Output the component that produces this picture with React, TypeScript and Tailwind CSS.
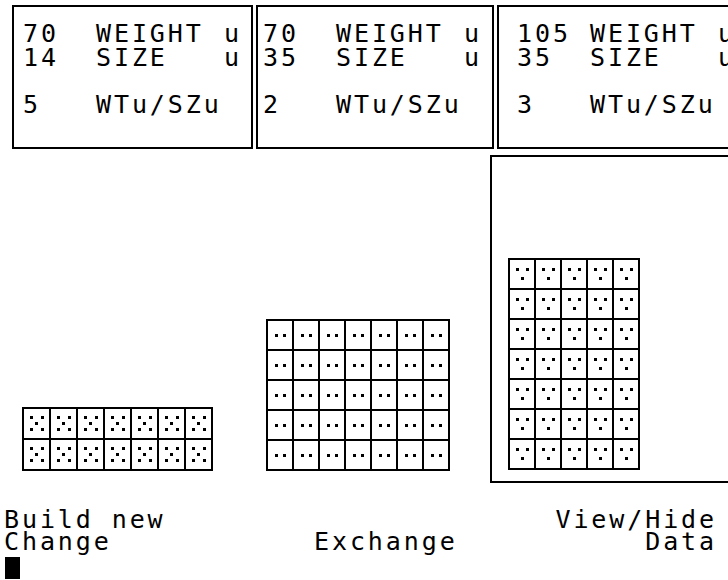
import React from "react";

const Dot = () => <div className="w-[3px] h-[3px] bg-black" />;

function Cell({ kind, big }: { kind: "five" | "two" | "three"; big?: boolean }) {
  const size = big ? "w-[25px] h-[29px]" : "w-[24px] h-[28px]";
  let inner: React.ReactNode = null;
  if (kind === "two") {
    inner = (
      <div className="flex h-full items-center justify-center gap-[5px]">
        <Dot />
        <Dot />
      </div>
    );
  } else if (kind === "three") {
    inner = (
      <div className="flex h-full flex-col items-center justify-center gap-[6px]">
        <div className="flex gap-[7px]">
          <Dot />
          <Dot />
        </div>
        <Dot />
      </div>
    );
  } else {
    inner = (
      <div className="flex h-full flex-col items-center justify-center gap-[3px]">
        <div className="flex gap-[8px]">
          <Dot />
          <Dot />
        </div>
        <Dot />
        <div className="flex gap-[8px]">
          <Dot />
          <Dot />
        </div>
      </div>
    );
  }
  return <div className={`${size} bg-white`}>{inner}</div>;
}

function Panel({
  w,
  pl,
  num1,
  num2,
  ratio,
}: {
  w: string;
  pl: string;
  num1: string;
  num2: string;
  ratio: string;
}) {
  return (
    <div className={`${w} h-[144px] shrink-0 border-2 border-black ${pl} pt-[15px] leading-[24px]`}>
      <div className="flex">
        <span className="w-[73px] shrink-0">{num1}</span>
        <span className="w-[128px] shrink-0">WEIGHT</span>
        <span>u</span>
      </div>
      <div className="flex">
        <span className="w-[73px] shrink-0">{num2}</span>
        <span className="w-[128px] shrink-0">SIZE</span>
        <span>u</span>
      </div>
      <div className="flex mt-[23px]">
        <span className="w-[73px] shrink-0">{ratio}</span>
        <span className="shrink-0">WTu/SZu</span>
      </div>
    </div>
  );
}

export default function App() {
  return (
    <div
      className="relative w-[728px] h-[580px] overflow-hidden bg-white text-black text-[25px] tracking-[2.9px]"
      style={{ fontFamily: '"DejaVu Sans Mono", "Liberation Mono", monospace' }}
    >
      {/* top data panels */}
      <div className="flex pt-[5px] pl-[12px] gap-[3px] whitespace-nowrap">
        <Panel w="w-[241px]" pl="pl-[9px]" num1="70" num2="14" ratio="5" />
        <Panel w="w-[238px]" pl="pl-[5px]" num1="70" num2="35" ratio="2" />
        <Panel w="w-[260px]" pl="pl-[18px]" num1="105" num2="35" ratio="3" />
      </div>

      {/* stacks */}
      <div className="flex items-end mt-[6px] h-[328px]">
        <div className="ml-[22px] mb-[12px] shrink-0 grid grid-cols-[repeat(7,25px)] gap-[2px] p-[2px] bg-black">
          {Array.from({ length: 14 }).map((_, i) => (
            <Cell key={i} kind="five" big />
          ))}
        </div>
        <div className="ml-[53px] mb-[12px] shrink-0 grid grid-cols-[repeat(7,24px)] gap-[2px] p-[2px] bg-black">
          {Array.from({ length: 35 }).map((_, i) => (
            <Cell key={i} kind="two" />
          ))}
        </div>
        <div className="ml-[40px] h-[328px] w-[260px] shrink-0 border-2 border-black flex items-end pl-[16px] pb-[11px]">
          <div className="shrink-0 grid grid-cols-[repeat(5,24px)] gap-[2px] p-[2px] bg-black">
            {Array.from({ length: 35 }).map((_, i) => (
              <Cell key={i} kind="three" />
            ))}
          </div>
        </div>
      </div>

      {/* menu text */}
      <div className="mt-[26px] leading-[22px] whitespace-nowrap">
        <div className="flex pl-[4px] pr-[11px]">
          <span>Build new</span>
          <span className="ml-auto">View/Hide</span>
        </div>
        <div className="flex pl-[4px] pr-[11px]">
          <span className="w-[310px] shrink-0">Change</span>
          <span>Exchange</span>
          <span className="ml-auto">Data</span>
        </div>
        <div className="ml-[5px] mt-[4px] w-[15px] h-[22px] bg-black" />
      </div>
    </div>
  );
}
